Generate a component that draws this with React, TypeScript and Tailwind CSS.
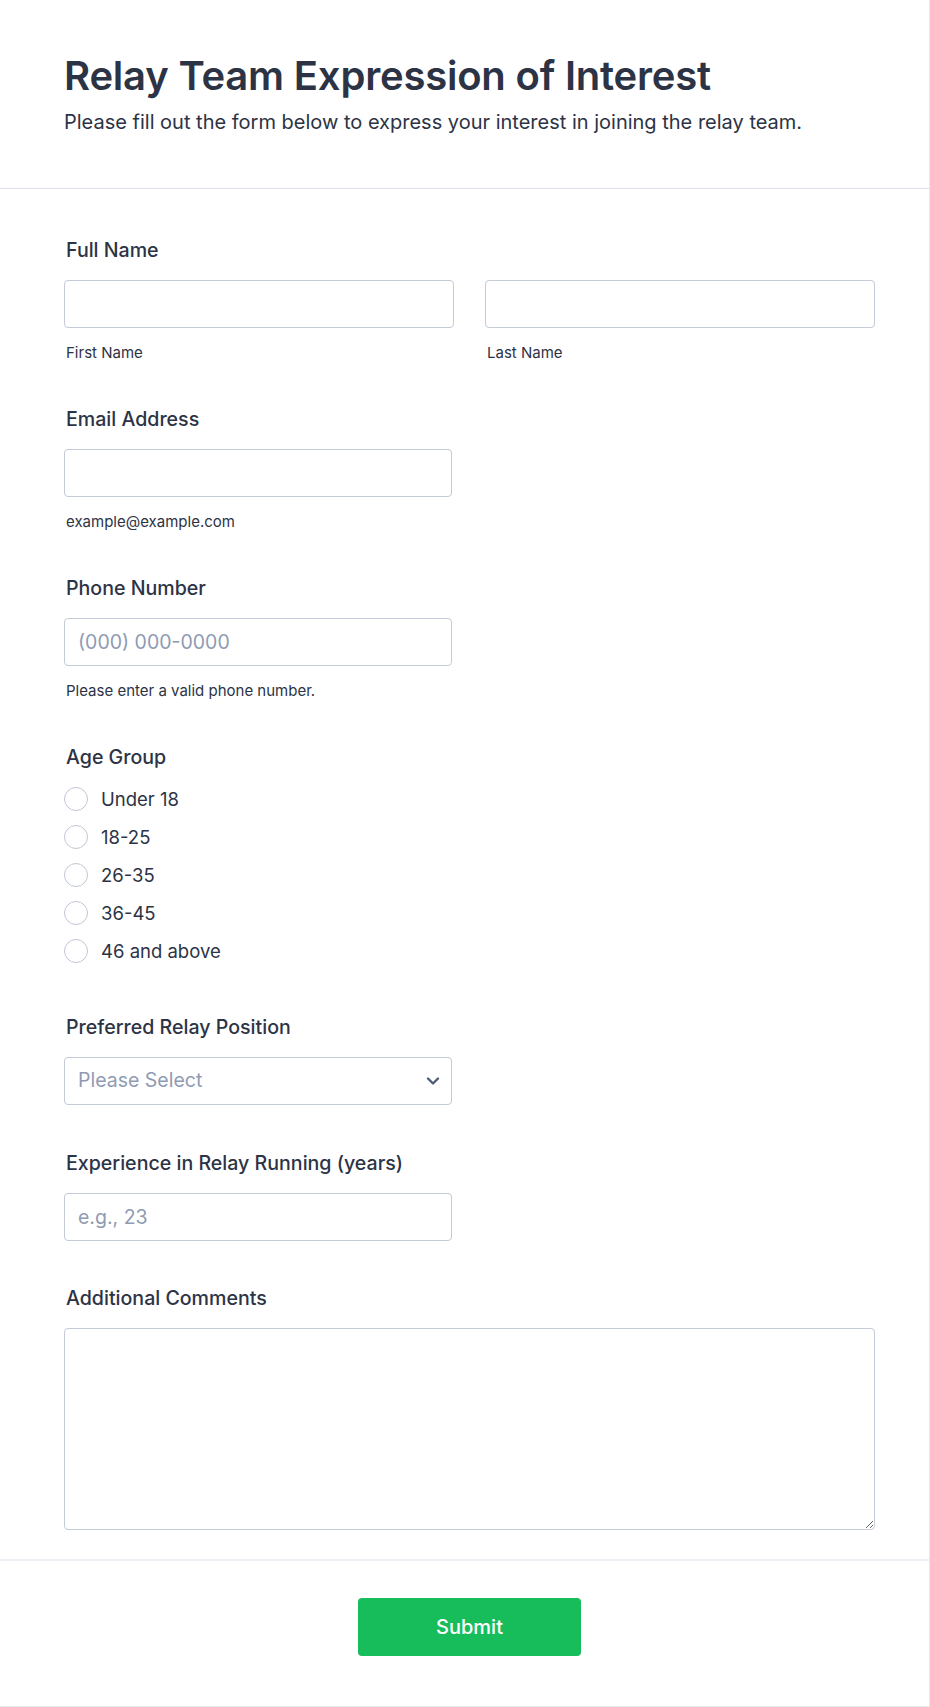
import React from 'react';

const ages = ['Under 18', '18-25', '26-35', '36-45', '46 and above'];

const inputCls =
  'block h-12 w-full rounded-[4px] border border-[#c3cad8] bg-white px-[13px] text-[19.5px] text-[#2c3345] placeholder:text-[#8f9bb3] outline-none';

const Label: React.FC<{ children: React.ReactNode }> = ({ children }) => (
  <label className="mb-[18px] block pl-0.5 text-[19.6px] font-medium leading-[24px] text-[#2c3345]">
    {children}
  </label>
);

const Sub: React.FC<{ children: React.ReactNode }> = ({ children }) => (
  <p className="mt-4 pl-0.5 text-[15px] leading-[18px] text-[#2c3345]">{children}</p>
);

export default function App() {
  return (
    <div className="min-h-[1707px] w-full bg-white font-['Inter','Noto_Sans',sans-serif] text-[#2c3345]">
      <div className="flex min-h-[1707px] flex-col border-r border-b border-[#e6e9f0]">
        {/* header */}
        <header className="border-b border-[#dcdfeb] pt-[52px] pr-[54px] pb-[52px] pl-16">
          <h1 className="text-[40px] leading-[48px] font-semibold tracking-[-0.2px] text-[#2c3345]">
            Relay Team Expression of Interest
          </h1>
          <p className="mt-2 text-[20px] leading-[28px] text-[#2c3345]">
            Please fill out the form below to express your interest in joining the relay team.
          </p>
        </header>

        {/* fields */}
        <form
          className="flex flex-col gap-[45px] pt-[49px] pr-[54px] pb-[29px] pl-16"
          onSubmit={(e) => e.preventDefault()}
        >
          <div>
            <Label>Full Name</Label>
            <div className="grid grid-cols-[390px_390px] gap-[31px]">
              <div>
                <input className={inputCls} />
                <Sub>First Name</Sub>
              </div>
              <div>
                <input className={inputCls} />
                <Sub>Last Name</Sub>
              </div>
            </div>
          </div>

          <div className="w-[388px]">
            <Label>Email Address</Label>
            <input className={inputCls} />
            <Sub>example@example.com</Sub>
          </div>

          <div className="w-[388px]">
            <Label>Phone Number</Label>
            <input className={inputCls} placeholder="(000) 000-0000" />
            <Sub>Please enter a valid phone number.</Sub>
          </div>

          <div>
            <Label>Age Group</Label>
            <div className="flex flex-col gap-[14px]">
              {ages.map((a) => (
                <label key={a} className="flex items-center gap-[13px]">
                  <span className="h-6 w-6 shrink-0 rounded-full border border-[#bfc6d4] bg-white" />
                  <span className="text-[18.5px] leading-[24px]">{a}</span>
                </label>
              ))}
            </div>
          </div>

          <div className="w-[388px] pt-[7px]">
            <Label>Preferred Relay Position</Label>
            <div className="relative">
              <div className={inputCls + ' flex items-center text-[#8f9bb3]'}>Please Select</div>
              <svg
                className="absolute top-1/2 right-[12px] -translate-y-1/2"
                width="14"
                height="9"
                viewBox="0 0 14 9"
                fill="none"
              >
                <path d="M2 2l5 5 5-5" stroke="#4f5d78" strokeWidth="2.4" strokeLinecap="round" strokeLinejoin="round" />
              </svg>
            </div>
          </div>

          <div className="w-[388px] pt-px">
            <Label>Experience in Relay Running (years)</Label>
            <input className={inputCls} placeholder="e.g., 23" />
          </div>

          <div className="w-[811px]">
            <Label>Additional Comments</Label>
            <textarea className="block h-[202px] w-full rounded-[4px] border border-[#c3cad8] bg-white px-3 py-2 text-[18px] outline-none" />
          </div>
        </form>

        {/* footer */}
        <div className="flex justify-center border-t-2 border-[#eceff4] pt-[37px] pr-[54px] pb-[48px] pl-16">
          <button className="h-[58px] w-[223px] rounded-[4px] bg-[#18bd5b] text-[20px] font-medium text-white">
            Submit
          </button>
        </div>
      </div>
    </div>
  );
}
